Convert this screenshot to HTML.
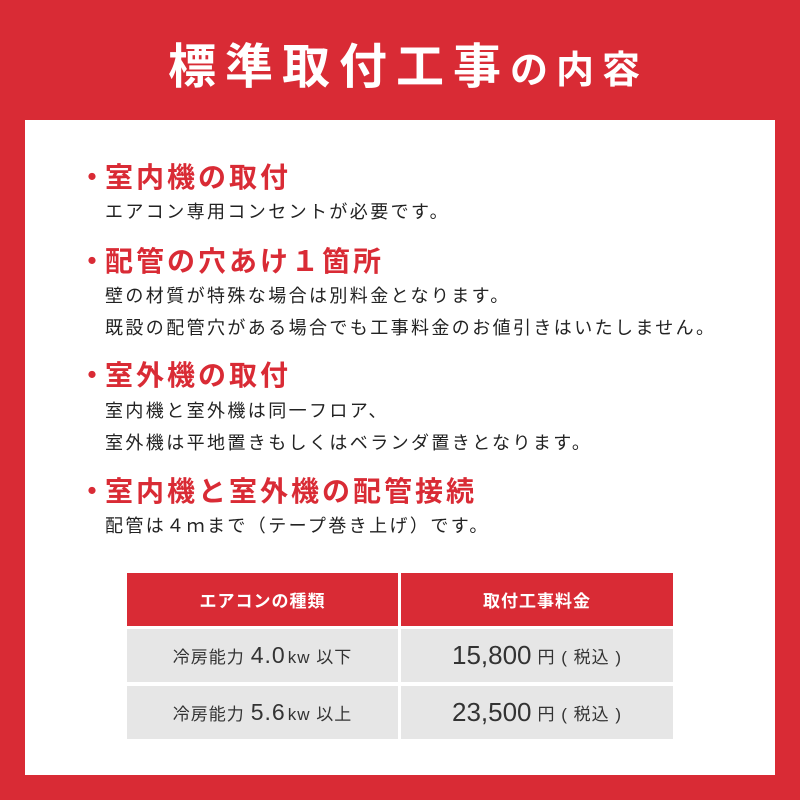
<!DOCTYPE html>
<html><head><meta charset="utf-8"><style>
body{margin:0;width:800px;height:800px;background:#d92b35;position:relative;overflow:hidden;font-family:"Liberation Sans","Noto Sans CJK JP",sans-serif;}
.t{position:absolute;white-space:nowrap;}
.title{left:8px;width:800px;text-align:center;top:36px;color:#fff;font-weight:bold;font-size:48px;line-height:64px;letter-spacing:9px}
.title small{font-size:38px;letter-spacing:8px}
.panel{position:absolute;left:25px;top:120px;width:750px;height:655px;background:#fff}
.h{left:105px;color:#d92b35;font-weight:bold;font-size:28px;line-height:36px;letter-spacing:3px}
.dot{left:78px;color:#d92b35;font-weight:bold;font-size:28px;line-height:36px}
.b{left:105px;color:#222;font-size:18px;line-height:24px;letter-spacing:2.4px}
.cell{position:absolute;display:flex;align-items:center;justify-content:center;}
.hd{background:#d92b35;color:#fff;font-weight:bold;font-size:17px;letter-spacing:1px}
.gr{background:#e6e6e6;color:#333;font-size:17px;letter-spacing:1px}
.big{font-size:23px;margin:0 2px 0 6px}
.pr{font-size:26px;margin-right:6px;letter-spacing:0}
</style></head><body>
<div class="t title">標準取付工事<small>の内容</small></div>
<div class="panel"></div>
<div class="t dot" style="top:160px">・</div><div class="t h" style="top:160px">室内機の取付</div>
<div class="t b" style="top:200px">エアコン専用コンセントが必要です。</div>
<div class="t dot" style="top:244px">・</div><div class="t h" style="top:244px">配管の穴あけ１箇所</div>
<div class="t b" style="top:284px">壁の材質が特殊な場合は別料金となります。</div>
<div class="t b" style="top:316px">既設の配管穴がある場合でも工事料金のお値引きはいたしません。</div>
<div class="t dot" style="top:358px">・</div><div class="t h" style="top:358px">室外機の取付</div>
<div class="t b" style="top:399px">室内機と室外機は同一フロア、</div>
<div class="t b" style="top:431px">室外機は平地置きもしくはベランダ置きとなります。</div>
<div class="t dot" style="top:474px">・</div><div class="t h" style="top:474px">室内機と室外機の配管接続</div>
<div class="t b" style="top:514px">配管は４ｍまで（テープ巻き上げ）です。</div>
<div class="cell hd" style="left:127px;top:573px;width:271px;height:53px">エアコンの種類</div>
<div class="cell hd" style="left:401px;top:573px;width:272px;height:53px">取付工事料金</div>
<div class="cell gr" style="left:127px;top:629px;width:271px;height:53px">冷房能力<span class="big">4.0</span>kw 以下</div>
<div class="cell gr" style="left:401px;top:629px;width:272px;height:53px"><span class="pr">15,800</span>円 ( 税込 )</div>
<div class="cell gr" style="left:127px;top:686px;width:271px;height:53px">冷房能力<span class="big">5.6</span>kw 以上</div>
<div class="cell gr" style="left:401px;top:686px;width:272px;height:53px"><span class="pr">23,500</span>円 ( 税込 )</div>
</body></html>
